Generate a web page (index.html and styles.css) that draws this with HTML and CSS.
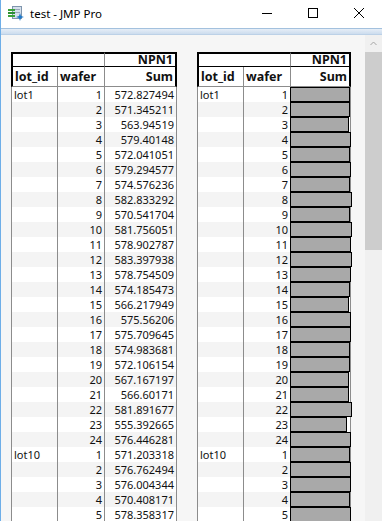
FILE: index.html
```html
<!DOCTYPE html>
<html lang="en">
<head>
    <meta charset="UTF-8">
    <title>test - JMP Pro</title>
    <link rel="stylesheet" href="styles.css">
</head>
<body>
<div class="window">
    <div class="titlebar">
        <svg class="app-icon" width="16" height="16" viewBox="0 0 16 16">
            <rect x="4.5" y="1.5" width="9" height="12" fill="#d5e0ec" stroke="#7f95ad"/>
            <rect x="6" y="4" width="6" height="1" fill="#9aaabb"/>
            <rect x="6" y="7" width="6" height="1" fill="#9aaabb"/>
            <rect x="0" y="4" width="7" height="2" fill="#3aa23a"/>
            <rect x="0" y="7" width="7" height="2" fill="#2e8f33"/>
            <rect x="0" y="10" width="7" height="2" fill="#3aa23a"/>
            <path d="M12 8 L13 11 L16 12 L13 13 L12 16 L11 13 L8 12 L11 11 Z" fill="#1f78c8"/>
        </svg>
        <span class="title">test - JMP Pro</span>
        <div class="controls">
            <svg class="ctl" width="46" height="28" viewBox="0 0 46 28"><path d="M18 13.5 H28" stroke="#000" stroke-width="1"/></svg>
            <svg class="ctl" width="46" height="28" viewBox="0 0 46 28"><rect x="18.5" y="8.5" width="9" height="9" fill="none" stroke="#000"/></svg>
            <svg class="ctl" width="46" height="28" viewBox="0 0 46 28"><path d="M18 8 L28 18 M28 8 L18 18" stroke="#000" stroke-width="1"/></svg>
        </div>
    </div>
    <div class="frame-band"></div>
    <div class="client">
        <div class="report">
            <table class="tab">
                <colgroup><col class="c-lot"><col class="c-wafer"><col class="c-sum"></colgroup>
                <thead>
                    <tr class="h1"><th colspan="2"></th><th class="r">NPN1</th></tr>
                    <tr class="h2"><th>lot_id</th><th>wafer</th><th class="r">Sum</th></tr>
                </thead>
                <tbody id="num-body"></tbody>
            </table>
            <table class="tab bars">
                <colgroup><col class="c-lot"><col class="c-wafer"><col class="c-bar"></colgroup>
                <thead>
                    <tr class="h1"><th colspan="2"></th><th class="r">NPN1</th></tr>
                    <tr class="h2"><th>lot_id</th><th>wafer</th><th class="r">Sum</th></tr>
                </thead>
                <tbody id="bar-body"></tbody>
            </table>
        </div>
        <div class="vscroll">
            <div class="arrow">
                <svg width="17" height="17" viewBox="0 0 17 17"><path d="M5.5 10 L8.5 7 L11.5 10" fill="none" stroke="#a6a6a6" stroke-width="1"/></svg>
            </div>
            <div class="thumb"></div>
        </div>
    </div>
</div>
<script src="app.js"></script>
</body>
</html>
```

FILE: styles.css
```css
html, body {
    margin: 0;
    padding: 0;
}
body {
    width: 382px;
    height: 521px;
    overflow: hidden;
    background: #f6f6f6;
    font-family: "Noto Sans", "Open Sans", sans-serif;
}
.window {
    height: 521px;
    border-left: 1px solid #6eaee8;
    display: flex;
    flex-direction: column;
}
.titlebar {
    height: 28px;
    background: #fff;
    display: flex;
    align-items: center;
    flex: none;
}
.app-icon {
    margin-left: 7px;
    margin-top: -2px;
}
.title {
    margin-left: 6px;
    font-size: 11.5px;
    color: #000;
    margin-top: -2px;
}
.controls {
    margin-left: auto;
    display: flex;
    align-self: flex-start;
}
.ctl {
    display: block;
}
.frame-band {
    flex: none;
    height: 5px;
    border-top: 1px solid #a3c1de;
    border-bottom: 1px solid #bcd1e7;
    background: linear-gradient(#e6eef7, #ccdcee);
}
.client {
    flex: 1;
    display: flex;
    overflow: hidden;
    background: #f6f6f6;
}
.report {
    flex: 1;
    display: flex;
    align-items: flex-start;
    gap: 20px;
    padding: 17px 0 0 10px;
}
.vscroll {
    width: 17px;
    flex: none;
    background: #f0f0f0;
}
.arrow {
    height: 17px;
}
.arrow svg {
    display: block;
}
.thumb {
    height: 198px;
    background: #cdcdcd;
}

/* report tables */
.tab {
    border-collapse: separate;
    border-spacing: 0;
    table-layout: fixed;
    font-size: 11px;
    color: #111;
}
.tab th, .tab td {
    box-sizing: border-box;
    padding: 0 2px;
    white-space: nowrap;
    overflow: visible;
}
.c-lot, .c-wafer { width: 47px; }
.c-sum { width: 72px; }
.c-bar { width: 60px; }

.tab th {
    font-size: 12.5px;
    font-weight: bold;
    text-align: left;
    background: #fff;
}
.tab .r {
    text-align: right;
}
.h1 th {
    height: 15px;
    line-height: 12px;
    border-top: 2px solid #000;
    border-bottom: 1px solid #000;
    border-right: 1px solid #8c8c8c;
}
.h1 th:first-child {
    border-left: 2px solid #000;
}
.h1 th:last-child {
    border-right: 2px solid #000;
}
.h2 th {
    height: 20px;
    line-height: 19px;
    border-bottom: 1px solid #8c8c8c;
    border-right: 1px solid #8c8c8c;
}
.h2 th:first-child {
    border-left: 2px solid #000;
}
.h2 th:last-child {
    border-right: 2px solid #000;
}
.tab td {
    height: 15px;
    line-height: 15px;
    border-right: 1px solid #8c8c8c;
    background: #fff;
}
.tab td:first-child {
    border-left: 1px solid #8c8c8c;
    padding-left: 2px;
}
.tab td.n {
    text-align: right;
}
.tab tr.alt td {
    background: #f4f4f4;
}
.tab td.barcell {
    padding: 0;
    position: relative;
}
.bar {
    position: absolute;
    left: -1px;
    top: 0;
    height: 15px;
    box-sizing: border-box;
    background: #a9a9a9;
    border: 1px solid #000;
}
```

FILE: app.js
```javascript
// wafer sums for NPN1
var rows = [
    ['lot1', 1, '572.827494'], ['', 2, '571.345211'], ['', 3, '563.94519'],
    ['', 4, '579.40148'], ['', 5, '572.041051'], ['', 6, '579.294577'],
    ['', 7, '574.576236'], ['', 8, '582.833292'], ['', 9, '570.541704'],
    ['', 10, '581.756051'], ['', 11, '578.902787'], ['', 12, '583.397938'],
    ['', 13, '578.754509'], ['', 14, '574.185473'], ['', 15, '566.217949'],
    ['', 16, '575.56206'], ['', 17, '575.709645'], ['', 18, '574.983681'],
    ['', 19, '572.106154'], ['', 20, '567.167197'], ['', 21, '566.60171'],
    ['', 22, '581.891677'], ['', 23, '555.392665'], ['', 24, '576.446281'],
    ['lot10', 1, '571.203318'], ['', 2, '576.762494'], ['', 3, '576.004344'],
    ['', 4, '570.408171'], ['', 5, '578.358317']
];

var numBody = document.getElementById('num-body');
var barBody = document.getElementById('bar-body');

rows.forEach(function (r, i) {
    var cls = i % 2 ? ' class="alt"' : '';
    var v = parseFloat(r[2]);
    var w = Math.round(56.3 + (v - 555.4) * 0.16) + 1;

    numBody.insertAdjacentHTML('beforeend',
        '<tr' + cls + '><td>' + r[0] + '</td><td class="n">' + r[1] +
        '</td><td class="n">' + r[2] + '</td></tr>');

    barBody.insertAdjacentHTML('beforeend',
        '<tr' + cls + '><td>' + r[0] + '</td><td class="n">' + r[1] +
        '</td><td class="barcell"><div class="bar" style="width:' + w + 'px"></div></td></tr>');
});
```
